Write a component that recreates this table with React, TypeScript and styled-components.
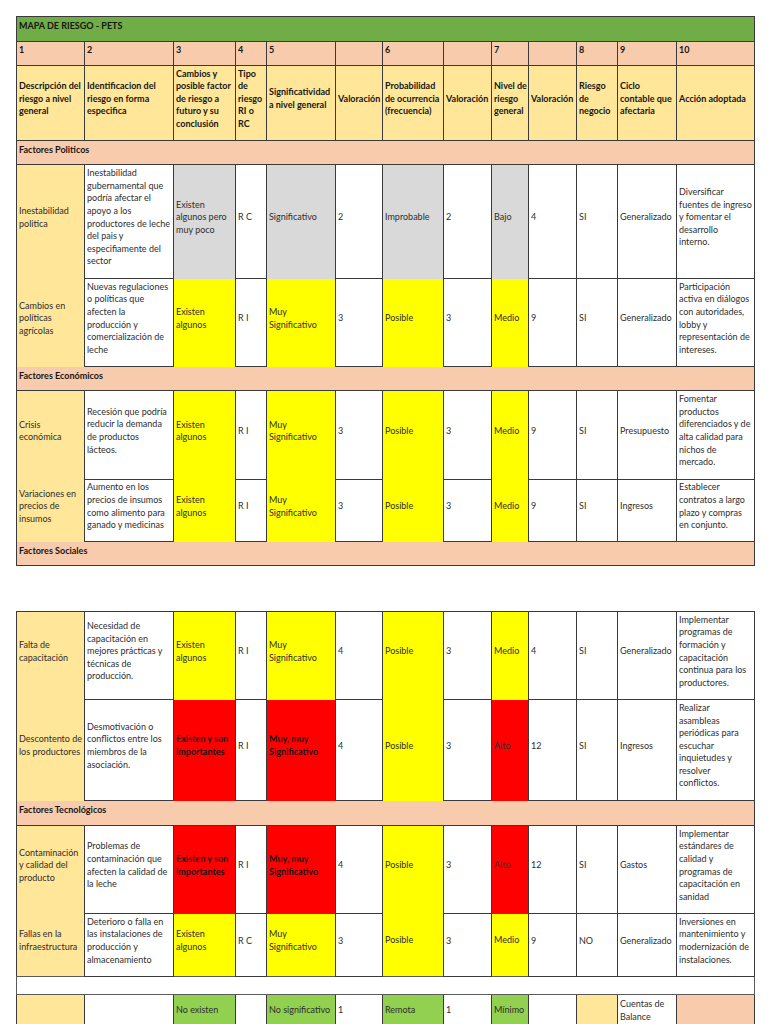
import React from "react";
import styled, { createGlobalStyle } from "styled-components";

const GlobalStyle = createGlobalStyle`
  html, body {
    margin: 0;
    padding: 0;
    background: #ffffff;
    overflow: hidden;
  }
  body {
    font-family: Lato, "Liberation Sans", Arial, sans-serif;
  }
`;

const palette = {
  white: "#ffffff",
  green: "#70ad47",
  peach: "#f8cbad",
  cream: "#ffe699",
  grey: "#d9d9d9",
  yellow: "#ffff00",
  red: "#ff0000",
  lime: "#92d050",
};

type Fill = keyof typeof palette;

type CellData = { t: string; f: Fill; b: boolean };

const c = (t = "", f: Fill = "white", b = false): CellData => ({ t, f, b });

// widths of the 13 spreadsheet columns, in px
const COLS = [68, 89, 62, 31, 69, 47, 61, 48, 37, 48, 41, 59, 78];

const LINE = "1px solid #3a3a3a";

const Page = styled.div`
  display: flex;
  flex-direction: column;
  gap: 45px;
  padding: 16px 0 0 16px;
`;

const Sheet = styled.table`
  border-collapse: collapse;
  table-layout: fixed;
  width: 738px;
  border: ${LINE};
  font-size: 9px;
  line-height: 12.6px;
  color: #2e2e2e;
`;

const Row = styled.tr<{ $h: number }>`
  height: ${(p) => p.$h}px;
`;

const Cell = styled.td<{ $fill: Fill; $ruled: boolean; $bold?: boolean; $top?: boolean }>`
  padding: ${(p) => (p.$top ? "2px 2px 0" : "0 2px 8px")};
  background: ${(p) => palette[p.$fill]};
  border: ${(p) => (p.$ruled ? LINE : "none")};
  font-weight: ${(p) => (p.$bold ? 700 : 400)};
  color: ${(p) => (p.$bold ? "#161616" : "#2e2e2e")};
  vertical-align: ${(p) => (p.$top ? "top" : "middle")};
  white-space: pre;
  overflow: hidden;
`;

const TitleCell = styled.td`
  padding: 3px 2px 0;
  background: ${palette.green};
  border: ${LINE};
  font-weight: 700;
  color: #161616;
  vertical-align: top;
`;

const SectionCell = styled.td`
  padding: 3px 2px 0;
  background: ${palette.peach};
  border-bottom: ${LINE};
  font-weight: 700;
  color: #161616;
  vertical-align: top;
`;

const BlankCell = styled.td`
  border: 1px solid #5a5a5a;
  background: #ffffff;
`;

const numbers = ["1", "2", "3", "4", "5", "", "6", "", "7", "", "8", "9", "10"];

const headers = [
  "Descripción del\nriesgo a nivel\ngeneral",
  "Identificacion del\nriesgo en forma\nespecifica",
  "Cambios y\nposible factor\nde riesgo a\nfuturo y su\nconclusión",
  "Tipo\nde\nriesgo\nRI o\nRC",
  "Significatividad\na nivel general",
  "Valoración",
  "Probabilidad\nde ocurrencia\n(frecuencia)",
  "Valoración",
  "Nivel de\nriesgo\ngeneral",
  "Valoración",
  "Riesgo\nde\nnegocio",
  "Ciclo\ncontable que\nafectaria",
  "Acción adoptada",
];

type Block =
  | { kind: "section"; title: string; h: number }
  | { kind: "data"; cells: CellData[]; h: number }
  | { kind: "blank"; h: number };

const firstPage: Block[] = [
  { kind: "section", title: "Factores Politicos", h: 24 },
  {
    kind: "data",
    h: 114,
    cells: [
      c("Inestabilidad\npolitica", "cream"),
      c("Inestabilidad\ngubernamental que\npodría afectar el\napoyo a los\nproductores de leche\ndel pais y\nespecifiamente del\nsector"),
      c("Existen\nalgunos pero\nmuy poco", "grey"),
      c("R C"),
      c("Significativo", "grey"),
      c("2"),
      c("Improbable", "grey"),
      c("2"),
      c("Bajo", "grey"),
      c("4"),
      c("SI"),
      c("Generalizado"),
      c("Diversificar\nfuentes de ingreso\ny fomentar el\ndesarrollo\ninterno."),
    ],
  },
  {
    kind: "data",
    h: 88,
    cells: [
      c("Cambios en\npolíticas\nagrícolas", "cream"),
      c("Nuevas regulaciones\no políticas que\nafecten la\nproducción y\ncomercialización de\nleche"),
      c("Existen\nalgunos", "yellow"),
      c("R I"),
      c("Muy\nSignificativo", "yellow"),
      c("3"),
      c("Posible", "yellow"),
      c("3"),
      c("Medio", "yellow"),
      c("9"),
      c("SI"),
      c("Generalizado"),
      c("Participación\nactiva en diálogos\ncon autoridades,\nlobby y\nrepresentación de\nintereses."),
    ],
  },
  { kind: "section", title: "Factores Económicos", h: 24 },
  {
    kind: "data",
    h: 89,
    cells: [
      c("Crisis\neconómica", "cream"),
      c("Recesión que podría\nreducir la demanda\nde productos\nlácteos."),
      c("Existen\nalgunos", "yellow"),
      c("R I"),
      c("Muy\nSignificativo", "yellow"),
      c("3"),
      c("Posible", "yellow"),
      c("3"),
      c("Medio", "yellow"),
      c("9"),
      c("SI"),
      c("Presupuesto"),
      c("Fomentar\nproductos\ndiferenciados y de\nalta calidad para\nnichos de\nmercado."),
    ],
  },
  {
    kind: "data",
    h: 62,
    cells: [
      c("Variaciones en\nprecios de\ninsumos", "cream"),
      c("Aumento en los\nprecios de insumos\ncomo alimento para\nganado y medicinas"),
      c("Existen\nalgunos", "yellow"),
      c("R I"),
      c("Muy\nSignificativo", "yellow"),
      c("3"),
      c("Posible", "yellow"),
      c("3"),
      c("Medio", "yellow"),
      c("9"),
      c("SI"),
      c("Ingresos"),
      c("Establecer\ncontratos a largo\nplazo y compras\nen conjunto."),
    ],
  },
  { kind: "section", title: "Factores Sociales", h: 24 },
];

const secondPage: Block[] = [
  {
    kind: "data",
    h: 88,
    cells: [
      c("Falta de\ncapacitación", "cream"),
      c("Necesidad de\ncapacitación en\nmejores prácticas y\ntécnicas de\nproducción."),
      c("Existen\nalgunos", "yellow"),
      c("R I"),
      c("Muy\nSignificativo", "yellow"),
      c("4"),
      c("Posible", "yellow"),
      c("3"),
      c("Medio", "yellow"),
      c("4"),
      c("SI"),
      c("Generalizado"),
      c("Implementar\nprogramas de\nformación y\ncapacitación\ncontinua para los\nproductores."),
    ],
  },
  {
    kind: "data",
    h: 101,
    cells: [
      c("Descontento de\nlos productores", "cream"),
      c("Desmotivación o\nconflictos entre los\nmiembros de la\nasociación."),
      c("Existen y son\nimportantes", "red", true),
      c("R I"),
      c("Muy, muy\nSignificativo", "red", true),
      c("4"),
      c("Posible", "yellow"),
      c("3"),
      c("Alto", "red"),
      c("12"),
      c("SI"),
      c("Ingresos"),
      c("Realizar\nasambleas\nperiódicas para\nescuchar\ninquietudes y\nresolver\nconflictos."),
    ],
  },
  { kind: "section", title: "Factores Tecnológicos", h: 25 },
  {
    kind: "data",
    h: 88,
    cells: [
      c("Contaminación\ny calidad del\nproducto", "cream"),
      c("Problemas de\ncontaminación que\nafecten la calidad de\nla leche"),
      c("Existen y son\nimportantes", "red", true),
      c("R I"),
      c("Muy, muy\nSignificativo", "red", true),
      c("4"),
      c("Posible", "yellow"),
      c("3"),
      c("Alto", "red"),
      c("12"),
      c("SI"),
      c("Gastos"),
      c("Implementar\nestándares de\ncalidad y\nprogramas de\ncapacitación en\nsanidad"),
    ],
  },
  {
    kind: "data",
    h: 63,
    cells: [
      c("Fallas en la\ninfraestructura", "cream"),
      c("Deterioro o falla en\nlas instalaciones de\nproducción y\nalmacenamiento"),
      c("Existen\nalgunos", "yellow"),
      c("R C"),
      c("Muy\nSignificativo", "yellow"),
      c("3"),
      c("Posible", "yellow"),
      c("3"),
      c("Medio", "yellow"),
      c("9"),
      c("NO"),
      c("Generalizado"),
      c("Inversiones en\nmantenimiento y\nmodernización de\ninstalaciones."),
    ],
  },
  { kind: "blank", h: 18 },
  {
    kind: "data",
    h: 40,
    cells: [
      c("", "cream"),
      c(""),
      c("No existen", "lime"),
      c(""),
      c("No significativo", "lime"),
      c("1"),
      c("Remota", "lime"),
      c("1"),
      c("Mínimo", "lime"),
      c(""),
      c("", "cream"),
      c("Cuentas de\nBalance"),
      c("", "peach"),
    ],
  },
];

const Columns: React.FC = () => (
  <colgroup>
    {COLS.map((w, i) => (
      <col key={i} style={{ width: w }} />
    ))}
  </colgroup>
);

const Body: React.FC<{ blocks: Block[] }> = ({ blocks }) => (
  <>
    {blocks.map((b, i) => {
      if (b.kind === "section") {
        return (
          <Row key={i} $h={b.h}>
            <SectionCell colSpan={13}>{b.title}</SectionCell>
          </Row>
        );
      }
      if (b.kind === "blank") {
        return (
          <Row key={i} $h={b.h}>
            <BlankCell colSpan={13} />
          </Row>
        );
      }
      return (
        <Row key={i} $h={b.h}>
          {b.cells.map((cell, j) => (
            <Cell key={j} $fill={cell.f} $ruled={cell.f === "white"} $bold={cell.b}>
              {cell.t}
            </Cell>
          ))}
        </Row>
      );
    })}
  </>
);

const App: React.FC = () => {
  return (
    <>
      <GlobalStyle />
      <Page>
        <Sheet>
          <Columns />
          <tbody>
            <Row $h={25}>
              <TitleCell colSpan={13}>MAPA DE RIESGO - PETS</TitleCell>
            </Row>
            <Row $h={24}>
              {numbers.map((n, i) => (
                <Cell key={i} $fill="peach" $ruled $bold $top>
                  {n}
                </Cell>
              ))}
            </Row>
            <Row $h={75}>
              {headers.map((h, i) => (
                <Cell key={i} $fill="cream" $ruled $bold>
                  {h}
                </Cell>
              ))}
            </Row>
            <Body blocks={firstPage} />
          </tbody>
        </Sheet>
        <Sheet>
          <Columns />
          <tbody>
            <Body blocks={secondPage} />
          </tbody>
        </Sheet>
      </Page>
    </>
  );
};

export default App;
